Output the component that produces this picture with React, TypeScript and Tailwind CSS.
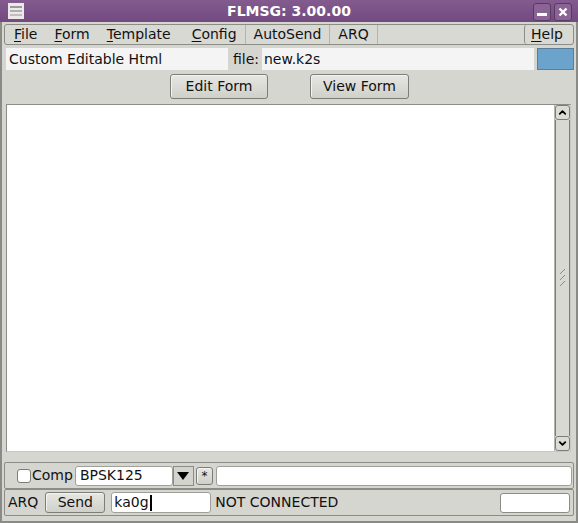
import { ChevronUp, ChevronDown } from "lucide-react";

const font = { fontFamily: '"DejaVu Sans", Verdana, sans-serif' };

function MenuItem({ label, u, wide, sep }: { label: string; u?: boolean; wide?: boolean; sep?: boolean }) {
  return (
    <div
      className={
        "flex h-full items-center pl-[8px] " +
        (wide ? "pr-[12px] " : "pr-[8px] ") +
        (sep ? "border-r border-[#b4b4af]" : "border-r border-transparent")
      }
    >
      {u ? (
        <span>
          <span className="underline underline-offset-2">{label[0]}</span>
          {label.slice(1)}
        </span>
      ) : (
        <span>{label}</span>
      )}
    </div>
  );
}

function Btn({ children, className }: { children: React.ReactNode; className: string }) {
  return (
    <div
      className={
        "flex items-center justify-center rounded-[3px] border border-[#7d7d78] bg-gradient-to-b from-[#e6e6e2] to-[#d0d0cb] shadow-[inset_1px_1px_0_#f4f4f0] " +
        className
      }
    >
      {children}
    </div>
  );
}

export default function App() {
  return (
    <div style={font} className="flex h-[523px] w-[578px] flex-col bg-[#d6d6d1] text-[14px] text-[#111]">
      {/* title bar */}
      <div className="relative flex h-[22px] items-center justify-center bg-gradient-to-b from-[#845b8e] to-[#734a80]">
        <div className="absolute left-[8px] top-[3px] h-[16px] w-[16px] bg-[#ece9ea]">
          <div className="mx-[2px] mt-[3px] h-[2px] bg-[#9a9a9a]" />
          <div className="mx-[2px] mt-[2px] h-[2px] bg-[#b0b0b0]" />
          <div className="mx-[2px] mt-[2px] h-[2px] bg-[#c0c0c0]" />
        </div>
        <span className="text-[14px] font-bold text-white">FLMSG: 3.00.00</span>
        <div className="absolute right-[27px] top-[3px] flex h-[18px] w-[18px] items-end justify-center rounded-[3px] border border-[#5a3a63] bg-[#8a6494] pb-[4px]">
          <div className="h-[3px] w-[10px] bg-white" />
        </div>
        <div className="absolute right-[6px] top-[3px] flex h-[18px] w-[18px] items-center justify-center rounded-[3px] border border-[#5a3a63] bg-[#8a6494]">
          <svg width="10" height="10" viewBox="0 0 10 10">
            <path d="M1.5 1.5 L8.5 8.5 M8.5 1.5 L1.5 8.5" stroke="white" strokeWidth="2.4" />
          </svg>
        </div>
      </div>

      <div className="flex flex-1 flex-col border-x-2 border-b-2 border-[#8a8a86] px-[2px]">
        {/* menu bar */}
        <div className="mt-[2px] flex h-[21px] items-center rounded-[3px] border border-[#8c8c87] bg-[#d9d9d4] pl-[1px]">
          <MenuItem label="File" u />
          <MenuItem label="Form" u />
          <MenuItem label="Template" u wide />
          <MenuItem label="Config" u sep />
          <MenuItem label="AutoSend" sep />
          <MenuItem label="ARQ" sep />
          <div className="flex-1" />
          <div className="flex h-full items-center rounded-[3px] border-l border-[#8c8c87] px-[6px] pr-[10px]">
            <span>
              <span className="underline underline-offset-2">H</span>elp
            </span>
          </div>
        </div>

        {/* file row */}
        <div className="mt-[3px] flex h-[22px] items-stretch">
          <div className="ml-[2px] flex w-[222px] items-center bg-[#f4f4f4] pl-[3px]">Custom Editable Html</div>
          <div className="flex w-[34px] items-center justify-end pr-[3px]">file:</div>
          <div className="flex flex-1 items-center bg-[#f4f4f4] pl-[2px]">new.k2s</div>
          <div className="ml-[3px] w-[37px] border border-[#5a7e9a] bg-[#6ba3cd]" />
        </div>

        {/* buttons */}
        <div className="mt-[4px] flex h-[25px]">
          <Btn className="ml-[166px] w-[98px]">Edit Form</Btn>
          <Btn className="ml-[42px] w-[99px]">View Form</Btn>
        </div>

        {/* text area */}
        <div className="ml-[2px] mr-[3px] mt-[5px] flex h-[348px] border border-[#8c8c87] border-r-[#c8c8c3] border-b-[#c8c8c3] bg-white">
          <div className="flex-1" />
          <div className="flex w-[16px] flex-col border-l border-[#b5b5b0] bg-[#d6d6d1]">
            <div className="flex h-[15px] items-center justify-center rounded-[3px] border border-[#7d7d78] bg-[#dcdcd7]">
              <ChevronUp size={11} strokeWidth={4} className="text-black" />
            </div>
            <div className="flex flex-1 items-center justify-center border-x border-[#7d7d78] bg-[#d9d9d4]">
              <svg width="8" height="20" viewBox="0 0 8 20">
                <path d="M1 6 L6 1 M1 12 L6 7 M1 18 L6 13" stroke="#8a8a86" strokeWidth="1" />
              </svg>
            </div>
            <div className="flex h-[15px] items-center justify-center rounded-[3px] border border-[#7d7d78] bg-[#dcdcd7]">
              <ChevronDown size={11} strokeWidth={4} className="text-black" />
            </div>
          </div>
        </div>

        {/* compression row */}
        <div className="mt-[10px] flex h-[27px] items-center rounded-[2px] border border-[#8c8c87] pl-[12px] pr-[1px]">
          <div className="h-[14px] w-[14px] rounded-[3px] border border-[#7d7d78] bg-white" />
          <span className="ml-[1px]">Comp</span>
          <div className="ml-[2px] flex h-[20px] w-[98px] items-center rounded-[3px] border border-[#a0a09b] bg-white pl-[4px]">BPSK125</div>
          <div className="flex h-[20px] w-[21px] items-center justify-center border border-[#8c8c87] bg-[#d4d4cf]">
            <svg width="12" height="8" viewBox="0 0 12 8">
              <path d="M0 0 L12 0 L6 8 Z" fill="black" />
            </svg>
          </div>
          <Btn className="ml-[2px] h-[18px] w-[17px] text-[12px]">*</Btn>
          <div className="ml-[3px] h-[20px] flex-1 rounded-[3px] border border-[#a0a09b] bg-white" />
        </div>

        {/* ARQ row */}
        <div className="flex h-[27px] items-center rounded-[2px] border border-[#8c8c87] pl-[3px] pr-[3px]">
          <span>ARQ</span>
          <Btn className="ml-[7px] h-[21px] w-[60px]">Send</Btn>
          <div className="ml-[6px] flex h-[21px] w-[100px] items-center rounded-[3px] border border-[#a0a09b] bg-white pl-[2px]">
            ka0g<span className="ml-[1px] inline-block h-[16px] w-[2px] bg-black" />
          </div>
          <span className="ml-[4px]">NOT CONNECTED</span>
          <div className="flex-1" />
          <div className="h-[20px] w-[70px] rounded-[3px] border border-[#8c8c87] bg-white" />
        </div>
        <div className="flex-1" />
      </div>
    </div>
  );
}
